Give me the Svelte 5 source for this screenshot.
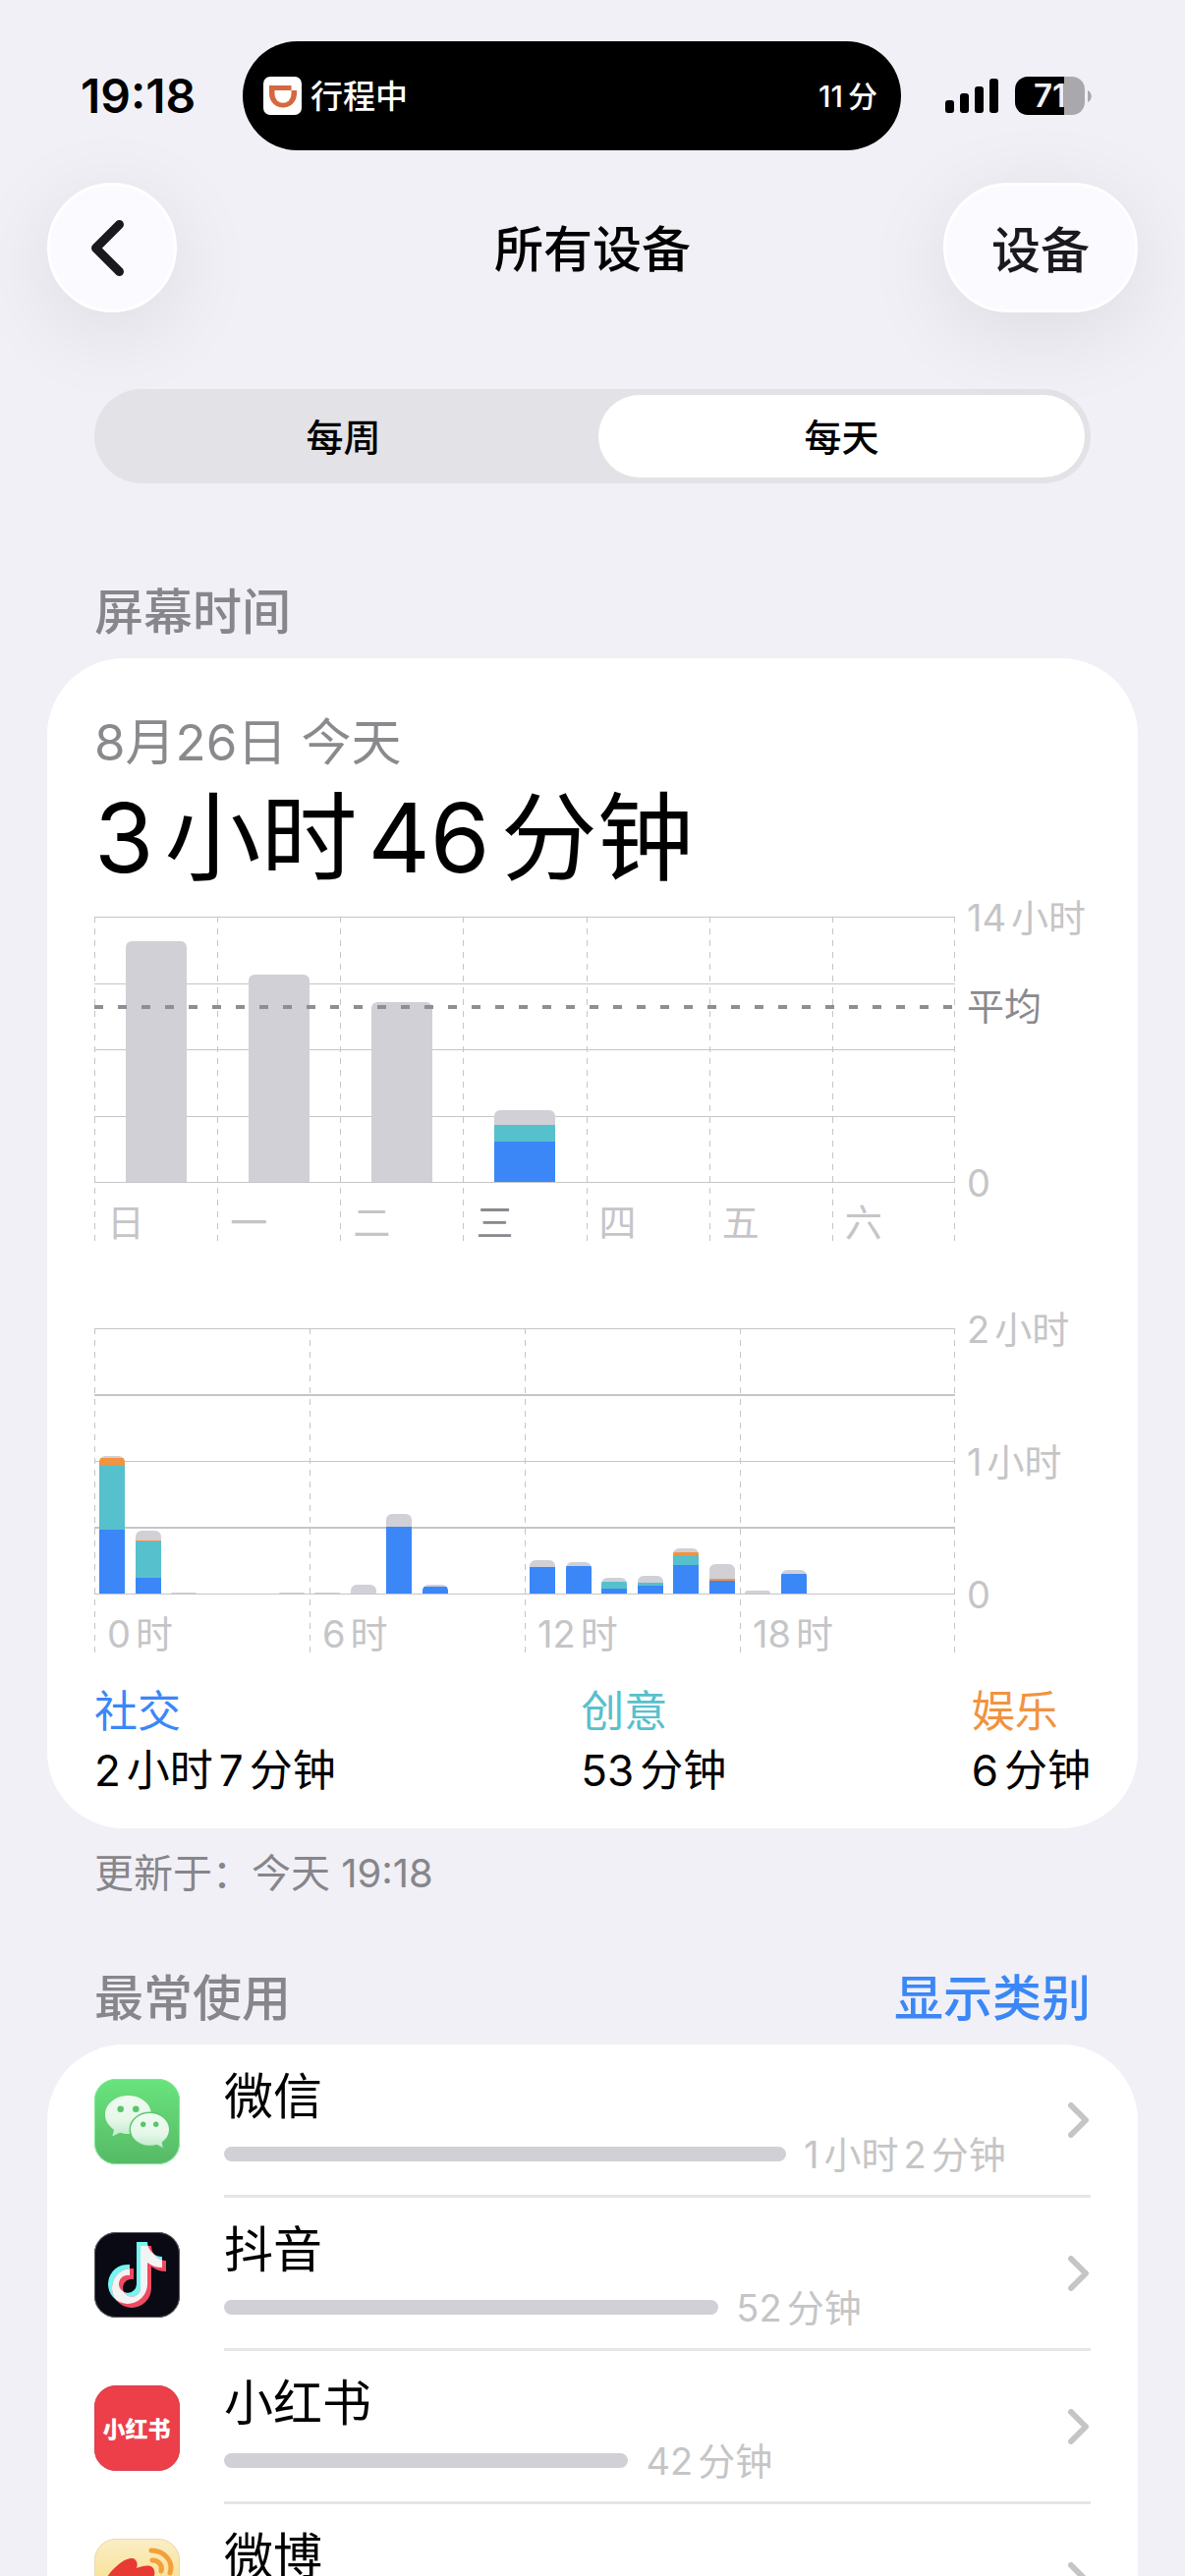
<script lang="ts">
  type Segment = { kind: 'social' | 'creative' | 'fun' | 'other'; size: number };

  const PLOT_HEIGHT = 270;

  let period = $state('每天');

  const week: { label: string; today?: boolean; segments: Segment[] }[] = [
    { label: '日', segments: [{ kind: 'other', size: 245 }] },
    { label: '一', segments: [{ kind: 'other', size: 211 }] },
    { label: '二', segments: [{ kind: 'other', size: 183 }] },
    {
      label: '三',
      today: true,
      segments: [
        { kind: 'other', size: 15 },
        { kind: 'creative', size: 17 },
        { kind: 'social', size: 41 }
      ]
    },
    { label: '四', segments: [] },
    { label: '五', segments: [] },
    { label: '六', segments: [] }
  ];

  // other, fun, creative, social (top to bottom)
  const hours = [
    [2, 8, 65, 65],
    [10, 1, 37, 16],
    [1, 0, 0, 0],
    [0, 0, 0, 0],
    [0, 0, 0, 0],
    [1, 0, 0, 0],
    [1, 0, 0, 0],
    [9, 0, 0, 0],
    [13, 0, 0, 68],
    [2, 0, 0, 7],
    [0, 0, 0, 0],
    [0, 0, 0, 0],
    [7, 0, 0, 27],
    [4, 0, 0, 28],
    [4, 0, 7, 5],
    [7, 0, 3, 8],
    [4, 3, 10, 29],
    [15, 2, 0, 13],
    [3, 0, 0, 0],
    [4, 0, 0, 20],
    [0, 0, 0, 0],
    [0, 0, 0, 0],
    [0, 0, 0, 0],
    [0, 0, 0, 0]
  ];
  const KINDS = ['other', 'fun', 'creative', 'social'];

  const quarters = [0, 6, 12, 18].map((start) => ({
    start,
    hours: hours.slice(start, start + 6)
  }));

  const categories = [
    { name: '社交', kind: 'social', time: '2 小时 7 分钟' },
    { name: '创意', kind: 'creative', time: '53 分钟' },
    { name: '娱乐', kind: 'fun', time: '6 分钟' }
  ];

  const apps = [
    { id: 'wechat', name: '微信', time: '1 小时 2 分钟', share: 66.6 },
    { id: 'douyin', name: '抖音', time: '52 分钟', share: 58.6 },
    { id: 'red', name: '小红书', time: '42 分钟', share: 47.9 },
    { id: 'weibo', name: '微博', time: '36 分钟', share: 41 }
  ];
</script>

{#snippet spaced(text: string)}
  <span class="spaced">
    {#each text.split(' ') as part}<span>{part}</span>{/each}
  </span>
{/snippet}

{#snippet appIcon(id: string)}
  <svg class="app-icon" viewBox="0 0 87 87" aria-hidden="true">
    {#if id === 'wechat'}
      <defs>
        <linearGradient id="wx-bg" x1="0" y1="0" x2="0" y2="1">
          <stop offset="0" stop-color="#69e47d" />
          <stop offset="1" stop-color="#56b966" />
        </linearGradient>
        <linearGradient id="wx-bubble" x1="0" y1="0" x2="0" y2="1">
          <stop offset="0" stop-color="#effbf1" />
          <stop offset="0.6" stop-color="#e6f7e9" />
          <stop offset="1" stop-color="#bfeac9" />
        </linearGradient>
      </defs>
      <rect width="87" height="87" rx="22" fill="url(#wx-bg)" />
      <rect x="0.5" y="0.5" width="86" height="86" rx="21.5" fill="none" stroke="#7fe995" />
      <path
        d="M34.5 17C21.5 17 11 25.500 11 36.500C11 42.500 14.500 48 20 51.700L18.300 58.500L26 54.700C28.700 55.600 31.500 56 34.500 56C47.500 56 58 47.500 58 36.500S47.500 17 34.500 17Z"
        fill="url(#wx-bubble)"
      />
      <path
        d="M56.500 35C45.700 35 37 42.300 37 51.400S45.700 67.800 56.500 67.800C59 67.800 61.500 67.400 63.700 66.700L69.800 70L68.600 64.300C73.200 61.300 76 56.700 76 51.400C76 42.300 67.300 35 56.500 35Z"
        fill="url(#wx-bubble)"
        stroke="#5ec670"
        stroke-width="3"
        paint-order="stroke"
      />
      <circle cx="26.700" cy="30.700" r="3.300" fill="#5bc46c" />
      <circle cx="42.300" cy="30.700" r="3.300" fill="#5bc46c" />
      <circle cx="49.700" cy="46.300" r="2.700" fill="#5bc46c" />
      <circle cx="62.700" cy="46.300" r="2.700" fill="#5bc46c" />
    {:else if id === 'douyin'}
      <defs>
        <path
          id="note"
          d="M43 10H54C54 18 61 25 69 25V36C63 36 58 34 54 31V53A20 20 0 1 1 36 33V44A9 9 0 1 0 43 53Z"
        />
        <clipPath id="note-clip"><use href="#note" /></clipPath>
      </defs>
      <rect width="87" height="87" rx="22" fill="#0a0a14" />
      <rect x="0.5" y="0.5" width="86" height="86" rx="21.5" fill="none" stroke="#5a5a61" />
      <use href="#note" fill="#74f6f2" />
      <use href="#note" x="4" y="4" fill="#ee4a62" />
      <g clip-path="url(#note-clip)"><use href="#note" x="4" y="4" fill="#f3f3f3" /></g>
    {:else if id === 'red'}
      <rect width="87" height="87" rx="22" fill="#ec3f4a" />
      <rect x="0.5" y="0.5" width="86" height="86" rx="21.5" fill="none" stroke="#d8434f" />
      <text class="red-mark" x="43" y="53" text-anchor="middle">小红书</text>
    {:else}
      <defs>
        <linearGradient id="wb-bg" x1="0" y1="0" x2="0" y2="1">
          <stop offset="0" stop-color="#fbeec6" />
          <stop offset="1" stop-color="#f6d566" />
        </linearGradient>
      </defs>
      <rect width="87" height="87" rx="22" fill="url(#wb-bg)" />
      <rect x="0.5" y="0.5" width="86" height="86" rx="21.5" fill="none" stroke="#e6dbb4" />
      <path
        d="M37 20C28 21 16 33 12 41C2 58 16 72 36 72C56 72 70 60 70 50C70 44 65 41 60 40C62 36 62 32 59 29C55 26 49 28 43 30C44 27 44 24 42 22C41 20 39 20 37 20Z"
        fill="#e73a33"
      />
      <ellipse cx="36" cy="55" rx="21" ry="14" fill="#fff" />
      <circle cx="34" cy="56" r="9" fill="#1a1a1a" />
      <path d="M58 12C71 12 81 23 77 35" fill="none" stroke="#f3a03a" stroke-width="5" stroke-linecap="round" />
      <path d="M59 22C65 22 70 27 68 33" fill="none" stroke="#f3a03a" stroke-width="5" stroke-linecap="round" />
    {/if}
  </svg>
{/snippet}

<div class="screen">
  <header class="status">
    <span class="clock">19:18</span>
    <div class="island">
      <svg class="ride-icon" viewBox="0 0 39 39" aria-hidden="true">
        <rect width="39" height="39" rx="7" fill="#fff" />
        <path d="M6 9H28.500V14H34V17.500A14 14 0 0 1 6 17.500Z" fill="#d4683f" />
        <path d="M11.500 14H28.500V18A8.500 8.800 0 0 1 11.500 18Z" fill="#fff" />
      </svg>
      <span class="ride">行程中</span>
      <span class="eta">{@render spaced('11 分')}</span>
    </div>
    <svg class="signal" viewBox="0 0 54 35" aria-hidden="true">
      <rect x="0" y="22" width="9" height="13" rx="3" />
      <rect x="15" y="15" width="9" height="20" rx="3" />
      <rect x="30" y="8" width="9" height="27" rx="3" />
      <rect x="45" y="0" width="9" height="35" rx="3" />
    </svg>
    <span class="battery">71</span>
    <svg class="nub" viewBox="0 0 4 12" aria-hidden="true">
      <path d="M0 0C5 2 5 10 0 12Z" fill="#a9a9ad" />
    </svg>
  </header>

  <nav class="nav">
    <button class="glass back" aria-label="返回">
      <svg viewBox="0 0 33 57" aria-hidden="true">
        <path d="M28.500 4.500L4.500 28.500L28.500 52.500" />
      </svg>
    </button>
    <h1>所有设备</h1>
    <button class="glass devices">设备</button>
  </nav>

  <main>
    <div class="segmented">
      {#each ['每周', '每天'] as option}
        <button class:active={period === option} aria-pressed={period === option} onclick={() => (period = option)}>
          {option}
        </button>
      {/each}
    </div>

    <div class="section-head">
      <h2>屏幕时间</h2>
    </div>
    <section class="card summary">
      <p class="date">8月26日 今天</p>
      <p class="total">{@render spaced('3 小时 46 分钟')}</p>

      <div class="chart">
        <div class="plot">
          <div class="lines">
            {#each Array(5) as _}<i></i>{/each}
          </div>
          <div class="columns week">
            {#each week as day}
              <div class="column">
                <div class="bars" style:height="{PLOT_HEIGHT}px">
                  <div class="bar">
                    {#each day.segments as segment}
                      <div class={segment.kind} style:height="{segment.size}px"></div>
                    {/each}
                  </div>
                </div>
                <span class="tick" class:today={day.today}>{day.label}</span>
              </div>
            {/each}
          </div>
          <div class="average"></div>
        </div>
        <div class="axis">
          <span>{@render spaced('14 小时')}</span>
          <span>0</span>
          <span class="average-label">平均</span>
        </div>
      </div>

      <div class="chart">
        <div class="plot">
          <div class="lines hourly">
            {#each Array(5) as _}<i></i>{/each}
          </div>
          <div class="columns day">
            {#each quarters as quarter}
              <div class="column">
                <div class="bars" style:height="{PLOT_HEIGHT}px">
                  {#each quarter.hours as hour}
                    <div class="bar">
                      {#each hour as size, i}
                        {#if size}<div class={KINDS[i]} style:height="{size}px"></div>{/if}
                      {/each}
                    </div>
                  {/each}
                </div>
                <span class="tick">{@render spaced(`${quarter.start} 时`)}</span>
              </div>
            {/each}
          </div>
        </div>
        <div class="axis">
          <span>{@render spaced('2 小时')}</span>
          <span>{@render spaced('1 小时')}</span>
          <span>0</span>
        </div>
      </div>

      <div class="categories">
        {#each categories as category}
          <div>
            <p class="name-{category.kind}">{category.name}</p>
            <p>{@render spaced(category.time)}</p>
          </div>
        {/each}
      </div>
    </section>
    <p class="updated">更新于：今天 19:18</p>

    <div class="section-head">
      <h2>最常使用</h2>
      <button class="link">显示类别</button>
    </div>
    <section class="card">
      {#each apps as app}
        <a class="app" href="#{app.id}">
          {@render appIcon(app.id)}
          <div class="app-body">
            <div class="app-info">
              <span class="app-name">{app.name}</span>
              <div class="usage">
                <div class="usage-bar" style:width="{app.share}%"></div>
                {@render spaced(app.time)}
              </div>
            </div>
            <svg class="chevron" viewBox="0 0 21 36" aria-hidden="true">
              <path d="M3 3L18 18L3 33" />
            </svg>
          </div>
        </a>
      {/each}
    </section>
  </main>
</div>

<style>
  :global(body) {
    background: #f1f0f6;
  }

  .screen {
    height: 100vh;
    overflow: hidden;
    background: #f1f0f6;
    color: #000;
    font-family: Inter, 'Noto Sans CJK SC', sans-serif;
    font-size: 38px;
  }

  h1,
  h2,
  p {
    margin: 0;
  }

  button {
    border: 0;
    padding: 0;
    background: none;
    color: inherit;
    font: inherit;
    cursor: pointer;
  }

  .spaced {
    display: inline-flex;
    align-items: baseline;
    gap: 5px;
    white-space: nowrap;
  }

  .status {
    display: flex;
    align-items: center;
    padding: 42px 95px 0 82px;
  }

  .clock {
    min-width: 118px;
    font-size: 48px;
    font-weight: 600;
  }

  .island {
    flex: 1;
    display: flex;
    align-items: center;
    height: 111px;
    margin: 0 45px 0 47px;
    padding: 0 24px 0 21px;
    box-sizing: border-box;
    border-radius: 56px;
    background: #000;
    color: #fff;
    font-weight: 500;
  }

  .ride-icon {
    width: 39px;
    height: 39px;
    margin-right: 9px;
  }

  .ride {
    flex: 1;
    padding-bottom: 3px;
    font-size: 33px;
  }

  .eta {
    padding-bottom: 3px;
    font-size: 30px;
  }

  .signal {
    width: 54px;
    height: 35px;
    margin-right: 17px;
  }

  .battery {
    width: 71px;
    height: 39px;
    border-radius: 13px;
    background: linear-gradient(90deg, #000 50px, #a9a9ad 50px);
    color: #f1f0f6;
    font-size: 33px;
    font-weight: 600;
    line-height: 39px;
    text-align: center;
  }

  .nub {
    width: 4px;
    height: 12px;
    margin-left: 3px;
  }

  .nav {
    display: grid;
    grid-template-columns: 1fr auto 1fr;
    align-items: center;
    padding: 33px 48px 0;
  }

  h1 {
    padding-top: 4px;
    font-size: 50px;
    font-weight: 500;
    line-height: 60px;
  }

  .glass {
    height: 132px;
    box-sizing: border-box;
    border: 3px solid #fff;
    border-radius: 66px;
    background: #fafaff;
    box-shadow: 0 18px 90px rgba(0, 0, 0, 0.09);
    color: #1a191e;
  }

  .back {
    width: 132px;
  }

  .back svg {
    display: block;
    width: 33px;
    height: 57px;
    margin-left: 42px;
    fill: none;
    stroke: #1a191e;
    stroke-width: 9;
    stroke-linecap: round;
    stroke-linejoin: round;
  }

  .devices {
    justify-self: end;
    padding: 0 46px 2px;
    font-size: 50px;
    font-weight: 500;
  }

  main {
    padding: 78px 48px 0;
  }

  .segmented {
    display: grid;
    grid-template-columns: 1fr 1fr;
    gap: 12px;
    margin: 0 48px 31px;
    padding: 6px;
    border-radius: 48px;
    background: #e3e2e7;
  }

  .segmented button {
    height: 84px;
    padding-bottom: 4px;
    border-radius: 42px;
    font-size: 38px;
    font-weight: 500;
  }

  .segmented .active {
    background: #fff;
  }

  .section-head {
    display: flex;
    justify-content: space-between;
    padding: 70px 48px 17px;
    font-size: 50px;
    line-height: 60px;
  }

  h2 {
    color: #86868b;
    font-size: 50px;
    font-weight: 500;
  }

  .link {
    color: #3b87f7;
    font-weight: 500;
  }

  .card {
    border-radius: 78px;
    background: #fff;
  }

  .summary {
    padding: 56px 48px 29px;
  }

  .date {
    color: #8a8a8e;
    font-size: 51px;
    line-height: 60px;
  }

  .total {
    margin-top: 12px;
    font-size: 98px;
    line-height: 110px;
  }

  .total .spaced {
    gap: 11px;
  }

  .chart {
    display: grid;
    grid-template-columns: 1fr 138px;
    margin-top: 25px;
    color: #c5c5c7;
  }

  .chart + .chart {
    margin-top: 88px;
  }

  .plot {
    position: relative;
  }

  .lines {
    position: absolute;
    inset: 0 0 auto;
    display: flex;
    flex-direction: column;
    justify-content: space-between;
    height: 271px;
  }

  .lines i {
    height: 1px;
    background: #c5c5ca;
  }

  .hourly i:nth-child(even) {
    height: 2px;
  }

  .columns {
    position: relative;
    display: grid;
    height: 331px;
    background: repeating-linear-gradient(#c5c5ca 0 6px, transparent 6px 12px) right / 1px 100% no-repeat;
  }

  .week {
    grid-template-columns: repeat(7, 1fr);
  }

  .day {
    grid-template-columns: repeat(4, 1fr);
  }

  .column {
    background: repeating-linear-gradient(#c5c5ca 0 6px, transparent 6px 12px) left / 1px 100% no-repeat;
  }

  .bars {
    display: flex;
    align-items: flex-end;
    justify-content: space-around;
  }

  .bar {
    width: 26px;
    border-radius: 6px 6px 0 0;
    overflow: hidden;
  }

  .week .bar {
    width: 62px;
  }

  .other {
    background: #d1d0d6;
  }

  .social {
    background: #3b87f7;
  }

  .creative {
    background: #57c0cd;
  }

  .fun {
    background: #f19340;
  }

  .tick {
    display: block;
    padding: 18px 0 0 13px;
    line-height: 46px;
  }

  .today {
    color: #8a8a8e;
  }

  .average {
    position: absolute;
    top: 90px;
    left: 0;
    right: 0;
    height: 4px;
    background: repeating-linear-gradient(90deg, #8e8e93 0 9px, transparent 9px 24px);
  }

  .axis {
    position: relative;
    display: flex;
    flex-direction: column;
    justify-content: space-between;
    height: 271px;
    padding-left: 12px;
    line-height: 46px;
  }

  .axis > span {
    display: flex;
    align-items: center;
    height: 1px;
  }

  .axis .average-label {
    position: absolute;
    top: 90px;
    color: #8a8a8e;
  }

  .categories {
    display: flex;
    justify-content: space-between;
    margin-top: 29px;
    font-size: 44px;
    line-height: 60px;
  }

  .categories .spaced {
    gap: 6px;
  }

  .name-social {
    color: #3b87f7;
  }

  .name-creative {
    color: #57c0cd;
  }

  .name-fun {
    color: #f19340;
  }

  .updated {
    padding: 21px 48px 2px;
    color: #86868b;
    font-size: 40px;
    line-height: 50px;
  }

  .app {
    display: flex;
    align-items: center;
    gap: 45px;
    padding: 0 48px;
    color: inherit;
    text-decoration: none;
  }

  .app-icon {
    flex: none;
    width: 87px;
    height: 87px;
  }

  .red-mark {
    fill: #fff;
    font-family: 'Noto Sans CJK SC', sans-serif;
    font-size: 23px;
    font-weight: 900;
  }

  .app-body {
    flex: 1;
    display: flex;
    align-items: center;
    height: 153px;
    border-bottom: 3px solid #e6e6e7;
  }

  .app-info {
    flex: 1;
    padding-top: 10px;
  }

  .app-name {
    display: block;
    font-size: 50px;
    line-height: 60px;
  }

  .usage {
    display: flex;
    align-items: center;
    gap: 18px;
    height: 58px;
    color: #c5c5c7;
    line-height: 46px;
  }

  .usage-bar {
    flex: none;
    height: 15px;
    border-radius: 8px;
    background: #d1d0d6;
  }

  .chevron {
    width: 21px;
    height: 36px;
    margin-right: 2px;
    fill: none;
    stroke: #c5c5c7;
    stroke-width: 6;
    stroke-linecap: round;
    stroke-linejoin: round;
  }
</style>
